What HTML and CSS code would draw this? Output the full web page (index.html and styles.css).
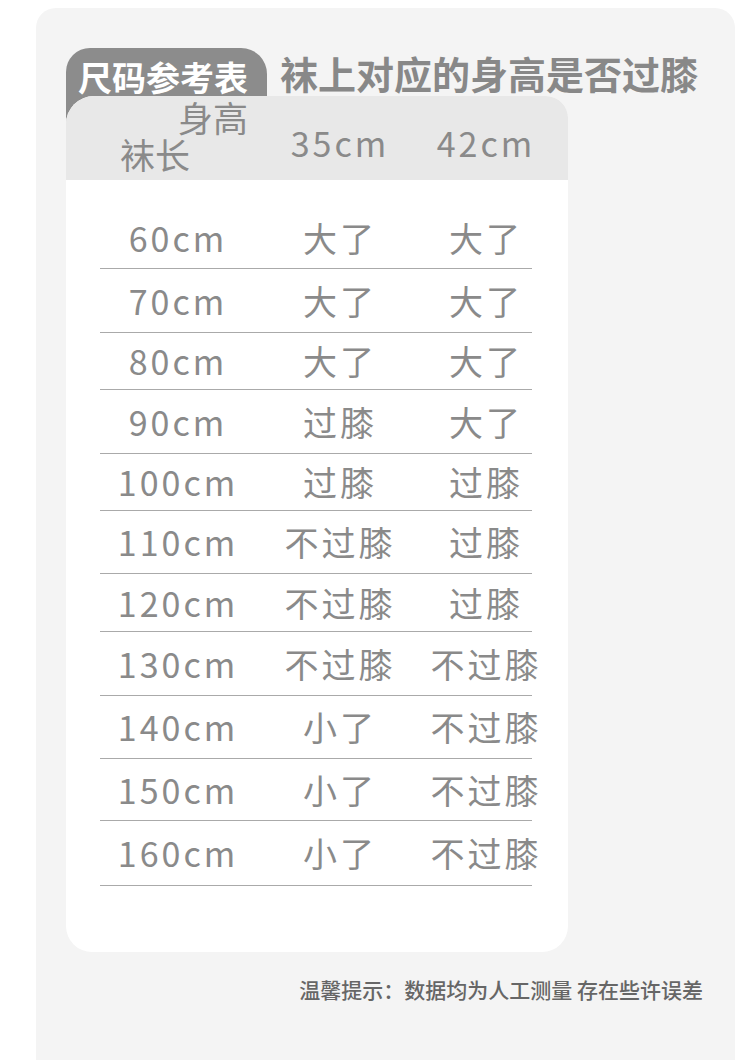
FILE: index.html
```html
<!DOCTYPE html>
<html lang="zh-CN">
<head>
<meta charset="utf-8">
<title>尺码参考表</title>
<link rel="stylesheet" href="styles.css">
</head>
<body>
<div class="panel">
  <div class="title-row">
    <div class="tab">尺码参考表</div>
    <h1 class="title">袜上对应的身高是否过膝</h1>
  </div>
  <div class="card">
    <div class="head">
      <div class="corner">
        <span class="corner-top">身高</span>
        <span class="corner-bottom">袜长</span>
      </div>
      <div class="cell lat">35cm</div>
      <div class="cell c3 lat">42cm</div>
    </div>
    <div class="body">
      <div class="row"><div class="cell lat">60cm</div><div class="cell">大了</div><div class="cell c3">大了</div></div>
      <div class="row"><div class="cell lat">70cm</div><div class="cell">大了</div><div class="cell c3">大了</div></div>
      <div class="row"><div class="cell lat">80cm</div><div class="cell">大了</div><div class="cell c3">大了</div></div>
      <div class="row"><div class="cell lat">90cm</div><div class="cell">过膝</div><div class="cell c3">大了</div></div>
      <div class="row"><div class="cell lat">100cm</div><div class="cell">过膝</div><div class="cell c3">过膝</div></div>
      <div class="row"><div class="cell lat">110cm</div><div class="cell">不过膝</div><div class="cell c3">过膝</div></div>
      <div class="row"><div class="cell lat">120cm</div><div class="cell">不过膝</div><div class="cell c3">过膝</div></div>
      <div class="row"><div class="cell lat">130cm</div><div class="cell">不过膝</div><div class="cell c3">不过膝</div></div>
      <div class="row"><div class="cell lat">140cm</div><div class="cell">小了</div><div class="cell c3">不过膝</div></div>
      <div class="row"><div class="cell lat">150cm</div><div class="cell">小了</div><div class="cell c3">不过膝</div></div>
      <div class="row"><div class="cell lat">160cm</div><div class="cell">小了</div><div class="cell c3">不过膝</div></div>
    </div>
  </div>
  <p class="note">温馨提示：数据均为人工测量 存在些许误差</p>
</div>
</body>
</html>
```

FILE: styles.css
```css
* { box-sizing: border-box; }

html, body {
  margin: 0;
  padding: 0;
  background: #ffffff;
}

body {
  font-family: "Noto Sans CJK SC", "Noto Sans", sans-serif;
  color: #8a8a8a;
  height: 1060px;
  overflow: hidden;
}

.panel {
  margin: 8px 15px 0 36px;
  width: 699px;
  height: 1052px;
  background: #f4f4f4;
  border-radius: 20px 20px 0 0;
  padding-top: 40px;
}

.title-row {
  display: flex;
  align-items: flex-start;
  margin-left: 30px;
}

.tab {
  width: 201px;
  height: 80px;
  background: #8c8c8c;
  border-radius: 24px 26px 0 0;
  color: #ffffff;
  font-weight: 700;
  font-size: 34px;
  line-height: 32px;
  padding: 13px 0 0 12px;
  white-space: nowrap;
}

.title {
  margin: 0 0 0 13px;
  font-size: 38px;
  line-height: 38px;
  padding-top: 6px;
  font-weight: 700;
  color: #888888;
  white-space: nowrap;
}

.card {
  position: relative;
  margin: -32px 0 0 30px;
  width: 502px;
  height: 856px;
  background: #ffffff;
  border-radius: 28px 22px 26px 26px;
}

.head {
  height: 84px;
  background: #e8e8e8;
  border-radius: 28px 22px 0 0;
  display: flex;
  align-items: center;
  padding-left: 34px;
}

.corner {
  width: 156px;
  height: 84px;
  display: flex;
  flex-direction: column;
  font-size: 35px;
  line-height: 37px;
  padding-top: 2px;
}

.corner-top {
  padding-left: 78px;
  white-space: nowrap;
}

.corner-bottom {
  padding-left: 20px;
  white-space: nowrap;
}

.head .cell {
  padding-top: 10px;
}

.body {
  padding: 27px 0 0 34px;
}

.row {
  display: flex;
  width: 432px;
  height: 62px;
  align-items: center;
  border-bottom: 1px solid #aaaaaa;
}

.row:nth-child(2) { height: 64px; }
.row:nth-child(3) { height: 57px; }
.row:nth-child(4) { height: 64px; }
.row:nth-child(5) { height: 57px; }
.row:nth-child(6) { height: 63px; }
.row:nth-child(7) { height: 58px; }
.row:nth-child(8) { height: 64px; }
.row:nth-child(9) { height: 63px; }
.row:nth-child(10) { height: 62px; }
.row:nth-child(11) { height: 65px; }

.cell {
  display: flex;
  justify-content: center;
  width: 168px;
  font-size: 34px;
  line-height: 40px;
  letter-spacing: 3px;
  white-space: nowrap;
}

.cell:first-child {
  width: 156px;
}

.cell.c3 {
  width: 108px;
  padding-left: 16px;
}

.lat {
  letter-spacing: 3px;
}

.note {
  margin: 24px 32px 0 0;
  text-align: right;
  font-size: 21px;
  line-height: 26px;
  font-weight: 500;
  color: #666666;
  white-space: nowrap;
}
```
